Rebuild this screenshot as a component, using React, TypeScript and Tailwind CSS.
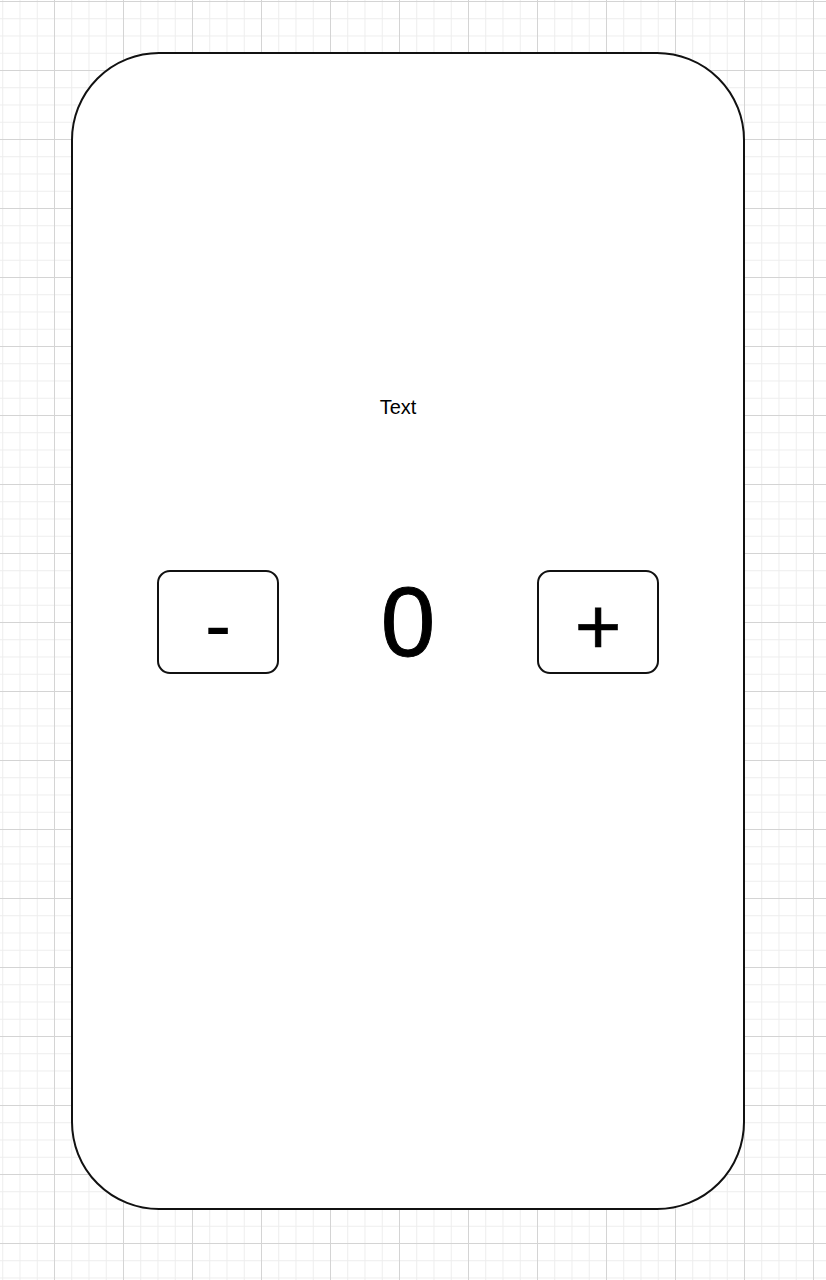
import React from "react";

export default function App() {
  return (
    <div
      className="relative w-[826px] h-[1280px] overflow-hidden bg-white [background-image:linear-gradient(to_right,#d4d4d4_1px,transparent_1px),linear-gradient(to_bottom,#d4d4d4_1px,transparent_1px),linear-gradient(to_right,#ededed_1px,transparent_1px),linear-gradient(to_bottom,#ededed_1px,transparent_1px)] [background-size:69px_69px,69px_69px,17.25px_17.25px,17.25px_17.25px] [background-position:54px_1px,54px_1px,2.25px_1px,2.25px_1px] pt-[52px] pl-[71px]"
      style={{ fontFamily: '"Liberation Sans", Arial, sans-serif' }}
    >
      <div className="w-[674px] h-[1158px] bg-white border-2 border-[#111] rounded-[88px] flex flex-col items-center pt-[343px]">
        <div className="text-[20px] leading-[20px] text-black mr-[20px]">Text</div>
        <div className="mt-[153px] w-full px-[84px] flex items-center justify-between">
          <button className="w-[122px] h-[104px] border-2 border-[#111] rounded-[13px] bg-white flex items-center justify-center text-[80px] leading-none text-black pt-[6px]">
            -
          </button>
          <div className="text-[98px] leading-none text-black [-webkit-text-stroke:1px_black]">0</div>
          <button className="w-[122px] h-[104px] border-2 border-[#111] rounded-[13px] bg-white flex items-center justify-center text-[80px] leading-none text-black pt-[10px] [-webkit-text-stroke:0.6px_black]">
            +
          </button>
        </div>
      </div>
    </div>
  );
}
